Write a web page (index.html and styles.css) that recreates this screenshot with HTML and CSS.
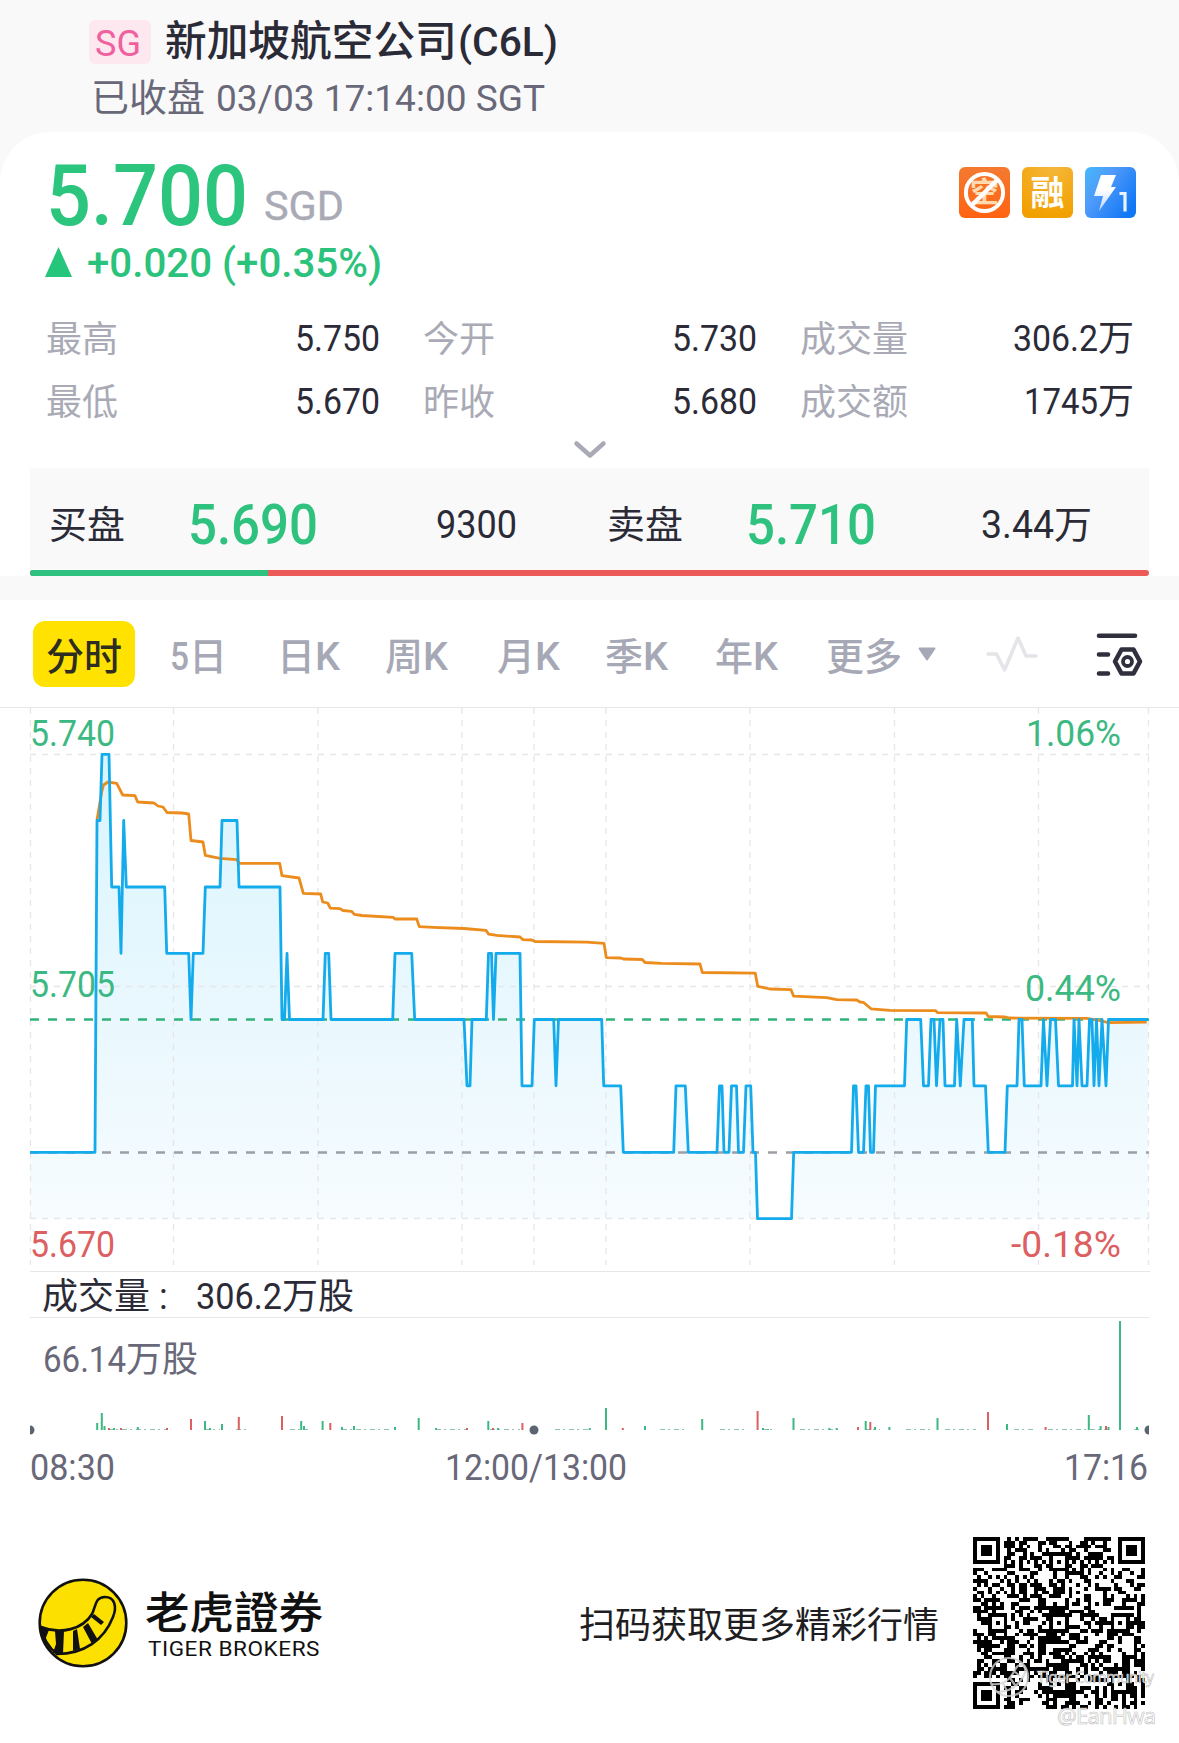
FILE: index.html
```html
<!DOCTYPE html>
<html lang="zh-CN">
<head>
<meta charset="utf-8">
<title>新加坡航空公司(C6L)</title>
<link rel="stylesheet" href="styles.css">
</head>
<body>
<header class="top">
  <div class="title-row">
    <span class="market"><span class="fit" data-w="46">SG</span></span>
    <h1 class="title">新加坡航空公司<span class="fit" data-w="100">(C6L)</span></h1>
  </div>
  <div class="status">已收盘<span class="fit status-time" data-w="329">03/03 17:14:00 SGT</span></div>
</header>

<main>
<section class="quote">
  <div class="price-row">
    <div class="price"><span class="fit" data-w="202">5.700</span></div>
    <div class="currency"><span class="fit" data-w="80">SGD</span></div>
    <div class="badges">
      <svg width="51" height="51" viewBox="0 0 51 51">
        <defs><linearGradient id="g1" x1="0" y1="0" x2="0" y2="1"><stop offset="0" stop-color="#f47a30"/><stop offset="1" stop-color="#ff6312"/></linearGradient></defs>
        <rect width="51" height="51" rx="6" fill="url(#g1)"/>
        <text x="25.5" y="36" text-anchor="middle" class="badge-char short">空</text>
        <circle cx="25.5" cy="25.5" r="18.6" fill="none" stroke="#fff" stroke-width="4"/>
        <path d="M12 39 39 12" stroke="#fff" stroke-width="4.5"/>
      </svg>
      <svg width="51" height="51" viewBox="0 0 51 51">
        <defs><radialGradient id="g2" cx=".6" cy="0" r="1"><stop offset="0" stop-color="#f5b73a"/><stop offset="1" stop-color="#f2a000"/></radialGradient></defs>
        <rect width="51" height="51" rx="6" fill="url(#g2)"/>
        <text x="25.5" y="38" text-anchor="middle" class="badge-char">融</text>
      </svg>
      <svg width="51" height="51" viewBox="0 0 51 51">
        <defs><linearGradient id="g3" x1="0" y1="0" x2="1" y2=".7"><stop offset="0" stop-color="#46b8fa"/><stop offset=".4" stop-color="#4f9bfa"/><stop offset="1" stop-color="#1177f5"/></linearGradient>
        <linearGradient id="g4" x1="0" y1="0" x2="0" y2="1"><stop offset=".4" stop-color="#fff"/><stop offset="1" stop-color="#b9d6ff"/></linearGradient></defs>
        <rect width="51" height="51" rx="6" fill="url(#g3)"/>
        <path d="M16 8h15l-5 12h5L14 44l4-15H9z" fill="url(#g4)"/>
        <path d="M34.500 26.500h5.500v18" fill="none" stroke="#e9f3ff" stroke-width="3.200"/>
      </svg>
    </div>
  </div>
  <div class="change"><i class="up"></i><span class="fit" data-w="295">+0.020 (+0.35%)</span></div>
  <dl class="stats">
    <div><dt>最高</dt><dd><span class="fit" data-w="85">5.750</span></dd></div>
    <div><dt>今开</dt><dd><span class="fit" data-w="85">5.730</span></dd></div>
    <div><dt>成交量</dt><dd><span class="fit" data-w="85">306.2</span>万</dd></div>
    <div><dt>最低</dt><dd><span class="fit" data-w="85">5.670</span></dd></div>
    <div><dt>昨收</dt><dd><span class="fit" data-w="85">5.680</span></dd></div>
    <div><dt>成交额</dt><dd><span class="fit" data-w="74">1745</span>万</dd></div>
  </dl>
  <svg class="chevron" width="34" height="20" viewBox="0 0 34 20"><path d="M3.500 3.500 17 15.500 30.500 3.500" fill="none" stroke="#a9aab6" stroke-width="4.500" stroke-linecap="round" stroke-linejoin="round"/></svg>
  <div class="book">
    <div class="book-row">
      <div class="side"><b>买盘</b><strong><span class="fit" data-w="130">5.690</span></strong><span class="qty bid-qty"><span class="fit" data-w="81">9300</span></span></div>
      <div class="side"><b>卖盘</b><strong><span class="fit" data-w="130">5.710</span></strong><span class="qty ask-qty"><span class="fit" data-w="73">3.44</span>万</span></div>
    </div>
    <div class="ratio"><i></i></div>
  </div>
</section>

<nav class="tabs">
  <span class="tab active">分时</span>
  <span class="tab t1"><span class="fit" data-w="19">5</span>日</span>
  <span class="tab t2">日<span class="fit" data-w="25">K</span></span>
  <span class="tab t3">周<span class="fit" data-w="25">K</span></span>
  <span class="tab t4">月<span class="fit" data-w="25">K</span></span>
  <span class="tab t5">季<span class="fit" data-w="25">K</span></span>
  <span class="tab t6">年<span class="fit" data-w="25">K</span></span>
  <span class="tab t7">更多<svg width="20" height="15" viewBox="0 0 20 15"><path d="M2.500 1.500h15L10 12.500z" fill="#a6a8b5" stroke="#a6a8b5" stroke-width="2" stroke-linejoin="round"/></svg></span>
  <svg class="wave" width="52" height="38" viewBox="0 0 52 38"><path d="M2 19h8.500l8 16L32 3l8 18h10" fill="none" stroke="#e4e4e9" stroke-width="3.500" stroke-linecap="round" stroke-linejoin="round"/></svg>
  <svg class="settings" width="50" height="46" viewBox="0 0 50 46" fill="none" stroke="#2f2f3d" stroke-width="4.600" stroke-linecap="round" stroke-linejoin="round"><path d="M4 3.700h36M4 22.500h9M4 41.500h9M26.500 17.500h12l6.500 12-6.500 12h-12l-6.500-12z"/><circle cx="32.500" cy="29.500" r="4.500" stroke-width="3.800"/></svg>
</nav>

<svg class="chart" width="1179" height="565" viewBox="0 707 1179 565">
  <defs><linearGradient id="area" gradientUnits="userSpaceOnUse" x1="0" y1="754" x2="0" y2="1219"><stop offset="0" stop-color="#00b8f0" stop-opacity=".15"/><stop offset="1" stop-color="#00a6f5" stop-opacity=".035"/></linearGradient></defs>
  <path class="rule" d="M0 707.500H1179M30 1271.500H1150"/>
  <path id="price-area" fill="url(#area)"/>
  <path class="grid" d="M30.500 708V1265M173.500 708V1265M318 708V1265M462 708V1265M534 708V1265M606 708V1265M750 708V1265M894.500 708V1265M1038.500 708V1265M1148.500 708V1265M30 754.500H1149M30 986.500H1149M30 1218.500H1149"/>
  <path class="last" d="M30 1019.500H1149"/>
  <path class="prev" d="M30 1152.500H1149"/>
  <polyline class="average" points="97,820 101.700,792 103.500,785 108,782 116.700,783.400 122.700,795 135,795.700 137.700,802 154,803 158,806 163,807 167,812.500 182,813 188.700,814 191,840.500 203,842 205.300,855.400 220,858.400 236.700,859.600 239.300,863.400 279.700,863.400 282,875.700 299,878 303.300,893.300 320.700,894 322.700,902 327.700,903 330.300,908.200 340,908.600 343,910.500 351.700,911.300 354.300,914.300 361.700,915.500 393.300,917.400 395,919 416.700,919 419.300,926.600 433.300,927.300 464,928.500 486,930.400 488.700,934.200 496.700,935.400 520,937 522.700,939.600 531.700,940 535,941.500 586.700,942.200 604,943.400 606.300,957.600 620.700,958 623.300,959 642.300,959.500 645,962.500 661.700,963.300 700,964 702.300,972.500 755.300,973.200 757.700,986.300 770,989 791,989.700 793.700,996.200 826.700,997.700 836.700,999.700 856.700,1000 860,1002 863.300,1002.300 871,1008.800 890,1010.400 935.700,1010.700 937.700,1012.700 986,1013 988.300,1016.500 1005,1017 1010,1018 1086.700,1018.400 1100,1020.700 1108.300,1022.600 1146.700,1022.200"/>
  <path id="price-line" class="line"/>
  <g class="gain">
    <text x="30" y="746" textLength="85" lengthAdjust="spacingAndGlyphs">5.740</text>
    <text x="30" y="997" textLength="85" lengthAdjust="spacingAndGlyphs">5.705</text>
    <text x="1026" y="746" textLength="95" lengthAdjust="spacingAndGlyphs">1.06%</text>
    <text x="1025" y="1001" textLength="96" lengthAdjust="spacingAndGlyphs">0.44%</text>
  </g>
  <g class="loss">
    <text x="30" y="1256.500" textLength="85" lengthAdjust="spacingAndGlyphs">5.670</text>
    <text x="1011" y="1256.500" textLength="110" lengthAdjust="spacingAndGlyphs">-0.18%</text>
  </g>
</svg>

<section class="volume">
  <div class="vol-head"><span>成交量</span><em>:</em><span><span class="fit" data-w="86">306.2</span>万股</span></div>
  <div class="vol-max"><span class="fit" data-w="83">66.14</span>万股</div>
  <svg class="vol-bars" width="1119" height="118" viewBox="30 1318 1119 118">
    <path d="M108 1429.500H167M205 1429.500H220M236 1429.500H250M290 1429.500H308M342 1429.500H392M436 1429.500H467M490 1429.500H520M555 1429.500H590M660 1429.500H688M720 1429.500H745M762 1429.500H772M800 1429.500H840M865 1429.500H880M906 1429.500H932M945 1429.500H976M1014 1429.500H1035M1048 1429.500H1112M1134 1429.500H1140" stroke="#8fc5ae" stroke-width="1" stroke-dasharray="5 3 2 4"/>
    <g id="bars"></g>
    <g fill="#5b6572"><circle cx="30" cy="1430" r="4.500"/><circle cx="534" cy="1430" r="4.500"/><circle cx="1149" cy="1430" r="4.500"/></g>
  </svg>
  <div class="times"><span class="fit" data-w="85">08:30</span><span class="fit" data-w="182">12:00/13:00</span><span class="fit" data-w="84">17:16</span></div>
</section>
</main>

<footer class="foot">
  <svg width="90" height="90" viewBox="0 0 90 90">
    <circle cx="45" cy="45" r="43.300" fill="#fbe000" stroke="#111" stroke-width="2.600"/>
    <path d="M3 49C23 57 45 51 54 36 58 28 57 19 67 19 77 19 79 29 75 39 66 62 46 76 19 76 10 69 5 61 3 49Z" fill="#fbe000" stroke="#111" stroke-width="2.600"/>
    <path d="M3 48 11 52 7 62ZM17 53 26 53 25 76 15 75 18 66ZM35 53 39 51 42 71 35 73ZM45 49 50 45 60 62 54 66ZM53 39 56 36 66 44 63 47Z" fill="#111"/>
  </svg>
  <div class="brand"><b>老虎證券</b><span class="fit brand-en" data-w="172">TIGER BROKERS</span></div>
  <p class="slogan">扫码获取更多精彩行情</p>
  <div class="qr">
    <svg width="172" height="172" viewBox="0 0 45 45" shape-rendering="crispEdges"><path id="qr" fill="#000"/></svg>
    <svg class="watermark" width="160" height="90" viewBox="0 0 160 90">
      <g fill="none" stroke="#d5d5d5" stroke-opacity=".8" stroke-width="2.200"><circle cx="25" cy="27" r="19"/><path d="M8 34c14 2 20-8 24-16 5-7 12-1 8 7-5 10-14 17-27 17M19 33l4 8M26 28l5 7M31 22l5 4"/></g>
      <text x="53" y="33" font-size="15.500" textLength="117" class="wm">Tiger Community</text>
      <text x="73" y="74" font-size="22" textLength="99" class="wm">@EanHwa</text>
    </svg>
  </div>
</footer>
<script src="app.js"></script>
</body>
</html>
```
FILE: styles.css
```css
* { box-sizing: border-box; }
body { margin: 0; width: 1179px; height: 1743px; overflow: hidden; background: #fff; color: #2b2b37; font-family: Roboto, "Noto Sans CJK SC", sans-serif; font-size: 36px; }
h1, p, dl, dd { margin: 0; }
i, em { font-style: normal; }
main { display: block; background: #f9f9f9; }
.fit { display: inline-block; white-space: pre; transform-origin: 0 50%; }

.top { height: 132px; padding: 18px 0 0 89px; background: #f9f9f9; }
.title-row { display: flex; align-items: center; height: 47px; gap: 14px; }
.market { width: 62px; height: 44px; padding-left: 6px; border-radius: 6px; background: #fde8f0; color: #f0609f; font-size: 37.500px; line-height: 46px; }
.title { font-size: 41.700px; font-weight: 500; line-height: 49px; color: #2b2b37; white-space: nowrap; }
.title .fit { margin-left: 1px; font-size: 40px; }
.status { padding-left: 2px; margin-top: 8px; font-size: 38px; line-height: 50px; color: #686879; }
.status-time { margin-left: 11px; font-size: 37.500px; }

.quote { display: flex; flex-direction: column; height: 444px; padding: 20px 30px 0; border-radius: 50px 50px 0 0; background: #fff; }
.price-row { display: flex; height: 86px; padding: 0 13px 0 16px; }
.price { font-size: 85px; font-weight: 500; line-height: 88px; color: #2bc57d; }
.currency { margin-left: 16px; font-size: 41px; line-height: 109px; color: #a9aab5; -webkit-text-stroke: .4px #a9aab5; }
.badges { display: flex; gap: 12px; margin: 15px 0 0 auto; }
.badge-char { fill: #fff; font: 700 34px "Noto Sans CJK SC", sans-serif; }
.badge-char.short { fill: #ffd9b0; font-size: 29px; }
.change { display: flex; align-items: center; gap: 15px; height: 50px; padding-left: 15px; font-size: 41px; font-weight: 500; line-height: 52px; color: #2bc27c; }
.up { width: 27px; height: 30px; margin-top: -2px; background: #25c67c; clip-path: polygon(50% 0, 100% 100%, 0 100%); }
.stats { display: grid; grid-template-columns: 334px 334px 334px; column-gap: 43px; grid-auto-rows: 63px; margin-top: 18px; padding-left: 16px; font-size: 36px; line-height: 67px; }
.stats div { display: flex; justify-content: space-between; }
.stats dt { color: #a9aab5; line-height: 69px; }
.stats dd { white-space: nowrap; }
.chevron { margin: 8px 0 0 543px; flex: none; }
.book { margin-top: auto; height: 108px; background: #f9f9f9; }
.book-row { display: grid; grid-template-columns: 558px 1fr; height: 102px; line-height: 114px; padding-left: 19px; }
.side { display: flex; }
.side b { width: 139px; font-size: 38px; font-weight: 400; }
.side strong { width: 130px; font-size: 55px; font-weight: 500; color: #2ec27e; }
.qty { font-size: 38px; }
.bid-qty { margin-left: 118px; }
.ask-qty { margin-left: 105px; }
.ratio { height: 6px; border-radius: 3px; background: #eb5a57; overflow: hidden; }
.ratio i { display: block; width: 238px; height: 6px; background: #2fc180; }

.tabs { display: flex; align-items: center; height: 107px; margin-top: 24px; padding: 0 34px 0 33px; background: #fff; color: #a6a8b5; font-size: 38px; font-weight: 500; line-height: 73px; white-space: nowrap; }
.tab { flex: none; height: 66px; }
.active { width: 102px; border-radius: 12px; background: #ffe200; color: #2e2d22; text-align: center; }
.t1 { width: 107px; margin-left: 35px; }
.t2 { width: 108px; }
.t3 { width: 112px; }
.t4 { width: 108px; }
.t5 { width: 110px; }
.t6 { width: 111px; }
.t7 { display: flex; align-items: flex-start; gap: 15px; }
.t7 svg { margin-top: 26px; }
.wave { margin-left: 49px; }
.settings { margin-left: auto; margin-top: 2px; }

.chart { display: block; background: #fff; font-size: 36.500px; }
.rule { stroke: #e7e7ea; }
.grid { fill: none; stroke: #e6e6e9; stroke-width: 1.300; stroke-dasharray: 6 6; }
.last, .prev { stroke-width: 2.500; stroke-dasharray: 9 9; }
.last { stroke: #2fb37b; }
.prev { stroke: #9c9fa5; }
.average, .line { fill: none; stroke-width: 2.800; stroke-linejoin: round; }
.average { stroke: #eb8c1c; }
.line { stroke: #14abec; }
.gain { fill: #3cb982; }
.loss { fill: #dc5f62; }

.volume { height: 231px; padding: 0 30px; background: #fff; }
.vol-head { display: flex; height: 46px; padding-left: 12px; border-bottom: 1px solid #e7e7ea; font-size: 36px; line-height: 50px; }
.vol-head em { width: 39px; margin-left: 7px; padding-left: 2px; }
.vol-max { height: 0; margin-bottom: -15px; padding: 15px 0 0 13px; font-size: 36px; line-height: 54px; color: #686879; }
.vol-bars { display: block; }
.times { display: flex; justify-content: space-between; height: 60px; padding-right: 1px; line-height: 63px; color: #686879; font-size: 36.500px; }
.times .fit:nth-child(2) { margin-left: -107px; }

.foot { display: flex; align-items: center; height: 240px; padding: 0 34px 0 38px; }
.brand { display: flex; flex-direction: column; align-items: flex-start; margin-left: 17px; width: 434px; color: #111; }
.brand b { font: 500 44.500px/52px "Noto Sans CJK TC", sans-serif; }
.brand-en { margin-left: 3px; font-size: 21px; line-height: 27px; letter-spacing: .5px; }
.slogan { font-size: 36px; line-height: 50px; padding-top: 6px; color: #1e1e22; white-space: nowrap; }
.qr { position: relative; width: 172px; height: 172px; margin-left: auto; }
.qr svg { display: block; }
.qr .watermark { position: absolute; left: 11px; top: 113px; overflow: visible; }
.wm { fill: #fff; fill-opacity: .85; stroke: #bdbdbd; stroke-width: .6px; font-family: "Noto Sans", sans-serif; }
```
FILE: app.js
```js
// Condense each numeric run to its DIN-like width.
document.querySelectorAll('.fit').forEach(function (el) {
  var w = +el.dataset.w, n = el.getBoundingClientRect().width;
  el.style.width = w + 'px';
  el.style.transform = 'scaleX(' + w / n + ')';
});

// Intraday price: x followed by the price level (a = 5.740, one cent per letter).
var levels = { a: 754.4, b: 820.5, c: 887, d: 953.3, e: 1019.5, f: 1085.8, g: 1152.3, h: 1218.6 };
var series = '30g 95g 97b 100b 102a 109a 111.7c 119c 121d 123.7b 126.3c 164.7c 166.7d 188.7d 191e 193.3d 203d 205.3c 220c 222b 237b 239c 280c 282e 284.5e 287d 289.5e 323e 325.3d 328.7d 331e 392.7e 395d 411.7d 414.7e 464e 467f 470f 472e 486.3e 488.5d 491.5d 493.5e 496d 520d 522f 532f 534.3e 553.7e 556f 558.5e 601.7e 603.7f 620.7f 623.3g 673.7g 676f 685.3f 688.3g 717g 719.5f 722f 724g 729g 731.5f 736.5f 738.5g 743.5g 746f 750.7f 753g 755.5g 757.5h 791.5h 793.7g 851.5g 853.5f 856f 858.5g 863.5g 866f 868.5f 870.5g 873.5g 875.5f 904.5f 906.7e 920.7e 923.5f 928.5f 931e 934e 936.5f 940e 943e 945f 954.5f 956.7e 960.3f 964e 972.3e 974f 985.5f 988.3g 1005g 1007.3f 1017f 1019e 1022e 1024.3f 1041f 1043.5e 1047f 1050.5e 1055.5e 1058.5f 1072.5f 1074e 1077f 1079e 1082f 1087f 1089.5e 1092e 1094f 1096.5e 1099f 1102e 1106f 1108.5e 1148e';
var d = 'M' + series.split(' ').map(function (p) {
  return p.slice(0, -1) + ' ' + levels[p.slice(-1)];
}).join('L');
document.getElementById('price-line').setAttribute('d', d);
document.getElementById('price-area').setAttribute('d', d + 'V1218.6H30Z');

// Volume: x, height; r marks a falling minute.
var bars = '97.2,7 101.8,17 104.500,4 109,2r 114,2 121,2r 137.8,3 167,2r 191,11r 205,9 210,2 222,6 238.8,13r 282,14r 301.2,9 304,4 322.6,9 330.3,7r 342,3 354,4 395,3 418.7,12 436,2 467,2r 488.3,9 493,2r 498,2 522.4,7r 589.7,2 606,22 622.8,2r 645,4 702.2,11 757.6,19r 763,2 768,1 793.5,12 829.4,2 836.7,2 858,3r 865.7,9 870.3,8r 875,3 889.4,3 937.5,12 988,18r 1007,6 1045.6,3r 1088.8,15 1100.6,4 1106,4r 1108.5,3 1120,109 1137,3';
document.getElementById('bars').innerHTML = bars.split(' ').map(function (b) {
  var v = b.replace('r', '').split(',');
  return '<rect x="' + (v[0] - 1) + '" y="' + (1430 - v[1]) + '" width="2" height="' + v[1] +
    '" fill="' + (b.slice(-1) === 'r' ? '#dc5f62' : '#3cb982') + '"/>';
}).join('');

// Version 7 code: 45 modules, finders in three corners, alignment marks at 6/22/38.
var N = 45, seed = 7919, out = '';
function ring(x, y, cx, cy, r) {
  var m = Math.max(Math.abs(x - cx), Math.abs(y - cy));
  return m > r ? null : m;
}
function cell(x, y) {
  seed = (seed * 1103515245 + 12345) % 2147483648;
  var bit = (seed / 65536 & 1) === 1, m, i;
  var finders = [[3, 3], [41, 3], [3, 41]];
  for (i = 0; i < 3; i++) {
    m = ring(x, y, finders[i][0], finders[i][1], 4);
    if (m !== null) return m !== 4 && m !== 2;
  }
  var marks = [[22, 6], [6, 22], [22, 22], [38, 22], [22, 38], [38, 38]];
  for (i = 0; i < 6; i++) {
    m = ring(x, y, marks[i][0], marks[i][1], 2);
    if (m !== null) return m !== 1;
  }
  if (x === 6 || y === 6) return (x + y) % 2 === 0;
  return bit;
}
for (var y = 0; y < N; y++) for (var x = 0; x < N; x++) if (cell(x, y)) out += 'M' + x + ' ' + y + 'h1v1h-1z';
document.getElementById('qr').setAttribute('d', out);
```
